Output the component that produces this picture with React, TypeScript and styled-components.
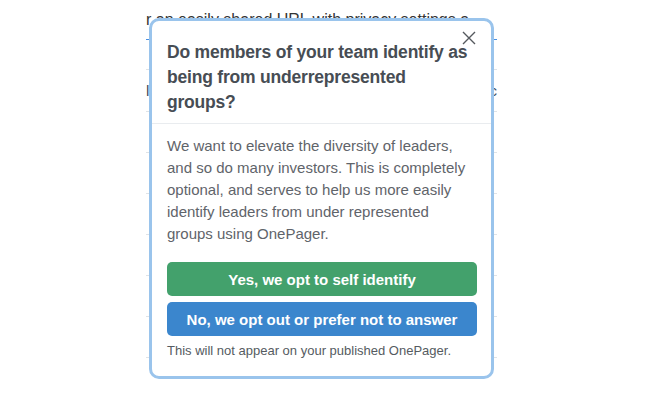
import { FC } from "react";
import styled, { createGlobalStyle } from "styled-components";

const GlobalStyle = createGlobalStyle`
  html, body {
    margin: 0;
    padding: 0;
    background: #ffffff;
    font-family: "Liberation Sans", Arial, sans-serif;
  }
`;

const Page = styled.div`
  position: relative;
  width: 670px;
  height: 400px;
  overflow: hidden;
  background: #fff;
`;

const Behind = styled.div`
  margin-left: 146px;
  width: 351px;
  display: flex;
  flex-direction: column;
`;

const TopLine = styled.div`
  height: 20px;
  padding-top: 12px;
  box-sizing: border-box;
  font-size: 16px;
  line-height: 16px;
  color: #333;
  white-space: nowrap;
`;

const Row = styled.div<{ $h: number; $accent?: boolean }>`
  height: ${(p) => p.$h}px;
  box-sizing: border-box;
  border-bottom: 1px solid ${(p) => (p.$accent ? "#4a90e2" : "#dfe3e7")};
  display: flex;
  align-items: center;
  justify-content: space-between;
  font-size: 15px;
  color: #3c4a5c;
`;

const Modal = styled.div`
  position: absolute;
  left: 149px;
  top: 18px;
  width: 345px;
  box-sizing: border-box;
  background: #fff;
  border: 3px solid #9ac4ec;
  border-radius: 10px;
`;

const Header = styled.div`
  position: relative;
  padding: 19px 18px 8px 15px;
  border-bottom: 1px solid #e9ecef;
`;

const Title = styled.h2`
  margin: 0;
  font-size: 17.5px;
  line-height: 25px;
  font-weight: 700;
  color: #474d54;
  letter-spacing: -0.2px;
`;

const Close = styled.button`
  position: absolute;
  top: 9px;
  right: 14px;
  width: 16px;
  height: 16px;
  padding: 0;
  border: 0;
  background: none;
  cursor: pointer;
  display: flex;
`;

const Body = styled.div`
  padding: 11px 14px 17px 15px;
  display: flex;
  flex-direction: column;
`;

const Text = styled.p`
  margin: 0 0 17px;
  font-size: 15px;
  line-height: 22px;
  color: #5f646a;
`;

const Btn = styled.button<{ $tone: "green" | "blue" }>`
  height: 34px;
  margin-bottom: 6px;
  border: 0;
  border-radius: 5px;
  background: ${(p) => (p.$tone === "green" ? "#43a16c" : "#3b86cd")};
  color: #fff;
  font-family: inherit;
  font-size: 15px;
  font-weight: 700;
  cursor: pointer;
`;

const Note = styled.div`
  margin-top: 1px;
  font-size: 13px;
  line-height: 16px;
  color: #555b61;
`;

const App: FC = () => {
  return (
    <Page>
      <GlobalStyle />
      <Behind>
        <TopLine>r an easily shared URL with privacy settings a</TopLine>
        <Row $h={20} $accent />
        <Row $h={30} />
        <Row $h={42}>
          <span>l</span>
          <span>c</span>
        </Row>
        <Row $h={41} />
        <Row $h={41} />
        <Row $h={41} />
        <Row $h={41} />
        <Row $h={41} />
        <Row $h={41} />
      </Behind>
      <Modal>
        <Header>
          <Title>Do members of your team identify as being from underrepresented groups?</Title>
          <Close aria-label="Close">
            <svg width="16" height="16" viewBox="0 0 16 16">
              <path d="M2 2 L14 14 M14 2 L2 14" stroke="#55595e" strokeWidth="1.4" />
            </svg>
          </Close>
        </Header>
        <Body>
          <Text>
            We want to elevate the diversity of leaders, and so do many investors. This is completely
            optional, and serves to help us more easily identify leaders from under represented groups
            using OnePager.
          </Text>
          <Btn $tone="green">Yes, we opt to self identify</Btn>
          <Btn $tone="blue">No, we opt out or prefer not to answer</Btn>
          <Note>This will not appear on your published OnePager.</Note>
        </Body>
      </Modal>
    </Page>
  );
};

export default App;
